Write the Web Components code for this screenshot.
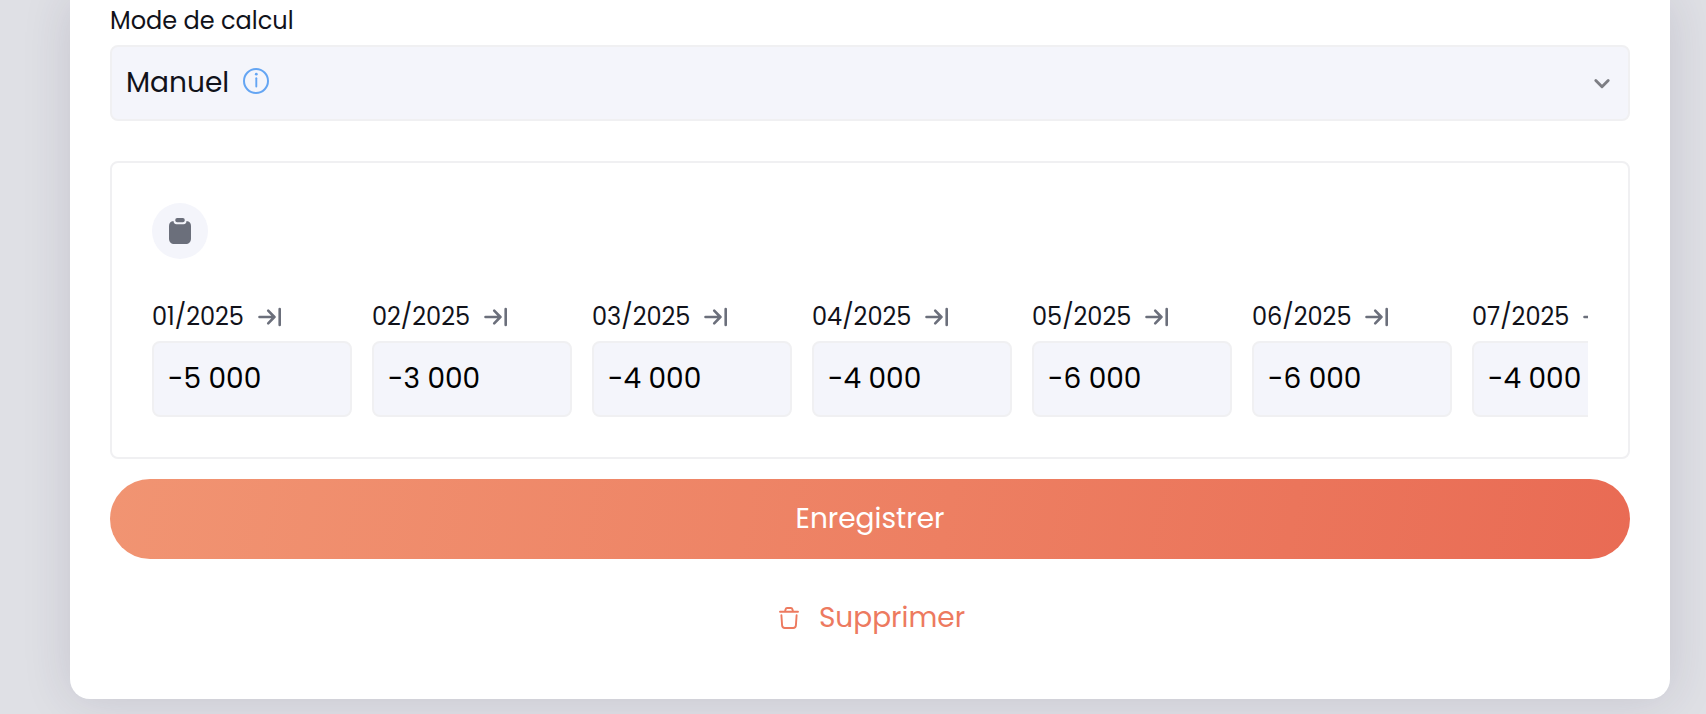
<!DOCTYPE html>
<html lang="fr">
<head>
<meta charset="utf-8">
<meta name="viewport" content="width=device-width, initial-scale=1">
<title>Mode de calcul</title>
<style>
  body {
    margin: 0;
    min-height: 100vh;
    box-sizing: border-box;
    overflow: hidden;
    background: #dfe0e5;
    color: #11121a;
    font-family: Poppins, Inter, "Open Sans", sans-serif;
    font-feature-settings: "cv11";
    font-size: 28px;
  }
</style>
</head>
<body>
<budget-card>
  <mode-field></mode-field>
  <month-panel></month-panel>
  <save-button>Enregistrer</save-button>
  <delete-button>Supprimer</delete-button>
</budget-card>

<script>
const define = (name, html, setup) => customElements.define(name, class extends HTMLElement {
  connectedCallback() {
    if (this.shadowRoot) return;
    const template = document.createElement('template');
    template.innerHTML = '<style>*{box-sizing:border-box}:host{display:block}</style>' + html;
    const root = this.attachShadow({ mode: 'open' });
    root.append(template.content.cloneNode(true));
    if (setup) setup.call(this, root);
  }
});

define('budget-card', `
  <style>
    :host { padding: 0 36px 15px 70px; }
    main {
      display: flex; flex-direction: column;
      padding: 3px 40px 40px;
      background: #fff;
      border-radius: 0 0 20px 20px;
      box-shadow: 0 0 48px rgba(52, 40, 82, .15);
    }
  </style>
  <main><slot></slot></main>`);

define('mode-field', `
  <style>
    :host { margin-bottom: 40px; }
    label { display: block; font-size: 24px; line-height: 36px; margin-bottom: 6px; }
    .box { position: relative; }
    select {
      display: block; width: 100%; height: 76px; margin: 0; padding: 0 60px 2px 14px;
      appearance: none; border: 2px solid #f0f0f2; border-radius: 8px;
      background: #f4f5fb; color: inherit; font: inherit; font-feature-settings: inherit;
    }
    .overlay {
      position: absolute; inset: 0; padding: 0 19px 0 16px; pointer-events: none;
      display: flex; align-items: center; gap: 14px;
    }
    .spacer { width: 103px; }
    .info { margin-bottom: 4px; }
    .chevron { margin-left: auto; }
    svg { display: block; fill: none; stroke-linecap: round; stroke-linejoin: round; }
  </style>
  <label for="mode">Mode de calcul</label>
  <div class="box">
    <select id="mode"><option>Manuel</option></select>
    <div class="overlay">
      <span class="spacer"></span>
      <svg class="info" width="26" height="26" viewBox="0 0 26 26" stroke="#64a5f3" aria-hidden="true">
        <circle cx="13" cy="13" r="12" stroke-width="2"/>
        <path d="M13.300 10.200v8.300" stroke-width="1.900"/><circle cx="13.300" cy="6.200" r="1.400" fill="#64a5f3" stroke="none"/>
      </svg>
      <svg class="chevron" width="18" height="12" viewBox="0 0 18 12" stroke="#7d7e84" stroke-width="2.900" aria-hidden="true"><path d="M2.800 3.500 9 9.700l6.200-6.200"/></svg>
    </div>
  </div>`);

define('month-panel', `
  <style>
    :host { margin-bottom: 20px; padding: 40px; border: 2px solid #f0f0f2; border-radius: 8px; }
    .paste {
      display: grid; place-items: center; width: 56px; height: 56px; padding: 0;
      margin-bottom: 40px; border: 0; border-radius: 50%; background: #f4f5fb;
    }
    .months { display: flex; gap: 20px; overflow: hidden; }
  </style>
  <button class="paste" type="button" aria-label="Coller">
    <svg width="22" height="26" viewBox="0 0 22 26" fill="#6b6f7b" aria-hidden="true">
      <path d="M4.500 3C1.500 3.400 0 5 0 8v12.500C0 24 2 26 5.500 26h11c3.500 0 5.500-2 5.500-5.500V8c0-3-1.500-4.600-4.500-5 0 2-1 3.200-3 3.200h-7c-2 0-3-1.200-3-3.200Z"/>
      <rect x="6.300" width="9.400" height="4.300" rx="1.800"/>
    </svg>
  </button>
  <div class="months"></div>`, function (root) {
  const values = ['-5 000', '-3 000', '-4 000', '-4 000', '-6 000', '-6 000', '-4 000'];
  values.forEach((value, i) => {
    const month = document.createElement('month-field');
    month.setAttribute('month', '0' + (i + 1) + '/2025');
    month.setAttribute('value', value);
    root.querySelector('.months').append(month);
  });
});

define('month-field', `
  <style>
    :host { flex: 0 0 200px; }
    .head { display: flex; align-items: center; gap: 14px; margin-bottom: 6px; font-size: 24px; line-height: 36px; }
    button { padding: 0; border: 0; background: none; }
    svg { display: block; }
    input {
      display: block; width: 100%; height: 76px; padding: 0 14px;
      border: 2px solid #f0f0f2; border-radius: 8px; background: #f4f5fb;
      color: #000; font: inherit; font-feature-settings: inherit;
    }
  </style>
  <div class="head">
    <label for="amount"></label>
    <button type="button" aria-label="Recopier vers la droite">
      <svg width="24" height="20" viewBox="0 0 24 20" fill="none" stroke="#6b6f7b" stroke-width="2.600" stroke-linecap="round" stroke-linejoin="round" aria-hidden="true">
        <path d="M1.500 10h15M10.200 3.700l6.200 6.300-6.200 6.300M21.700 2v16"/>
      </svg>
    </button>
  </div>
  <input id="amount" type="text" inputmode="numeric">`, function (root) {
  root.querySelector('label').textContent = this.getAttribute('month');
  root.querySelector('input').value = this.getAttribute('value');
});

define('save-button', `
  <style>
    :host { margin-bottom: 20px; }
    button {
      display: block; width: 100%; height: 80px; border: 0; border-radius: 40px;
      background: linear-gradient(100deg, #f19472, #ed7f62 55%, #e96b54);
      color: #fff; font: inherit; font-feature-settings: inherit;
    }
  </style>
  <button type="submit"><slot></slot></button>`);

define('delete-button', `
  <style>
    button {
      display: flex; align-items: center; justify-content: center; gap: 20px;
      width: 100%; height: 80px; padding: 0 0 2px 4px; border: 0; background: none;
      color: #ed7a5f; font: inherit; font-feature-settings: inherit;
    }
  </style>
  <button type="button">
    <svg width="20" height="22" viewBox="0 0 20 22" fill="none" stroke="currentColor" stroke-width="1.900" stroke-linecap="round" stroke-linejoin="round" aria-hidden="true">
      <path d="M1 4.700h18M6 4.500l.6-2.300Q6.900 1 8.100 1h3.800q1.200 0 1.500 1.200l.6 2.300M2.400 8.200l.7 10.200Q3.300 21 5.800 21h8.400q2.500 0 2.700-2.600l.7-10.200"/>
    </svg>
    <slot></slot>
  </button>`);
</script>
</body>
</html>
